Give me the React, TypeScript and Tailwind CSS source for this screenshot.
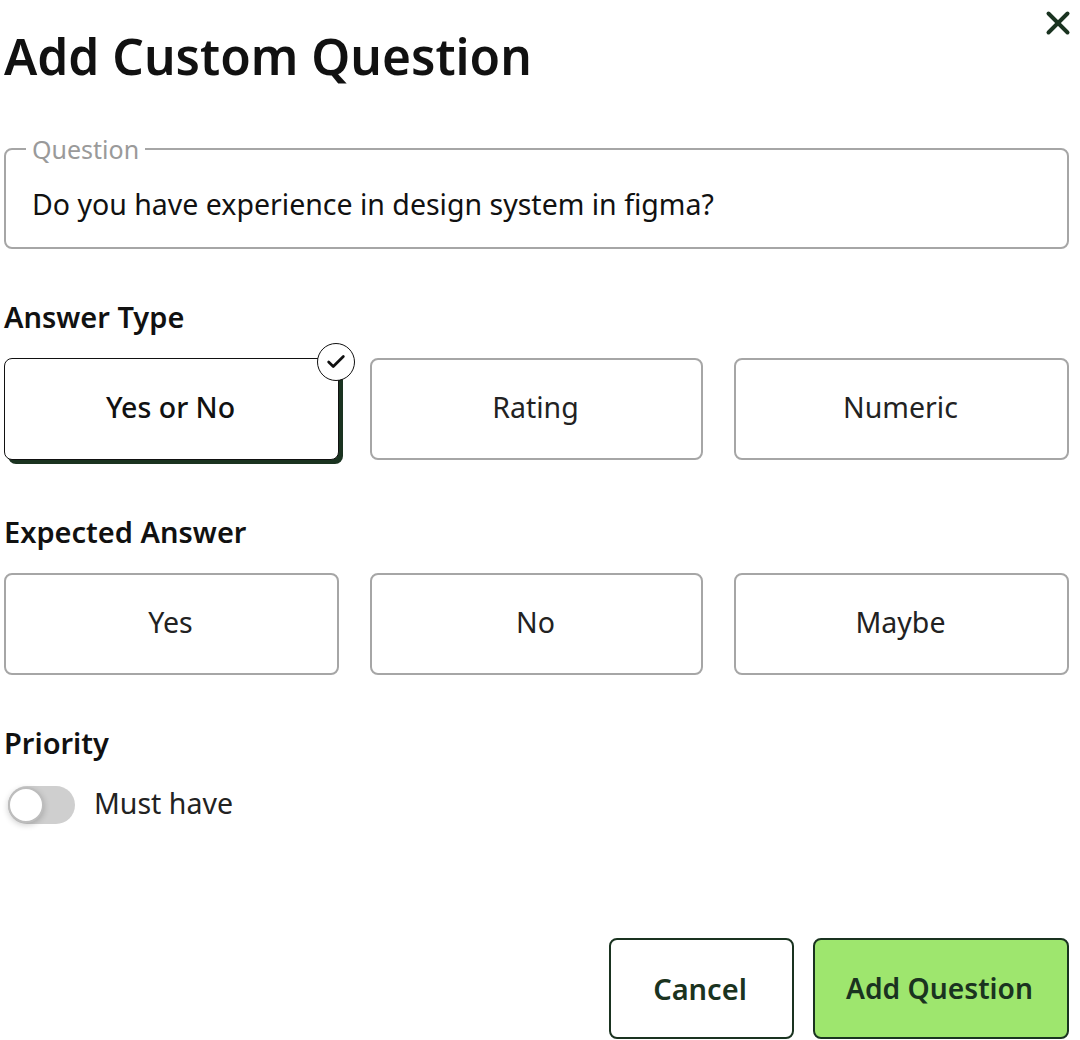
import React from 'react';
import { X, Check } from 'lucide-react';

const font = { fontFamily: '"Noto Sans", sans-serif' };

function Choice({ label, selected = false }: { label: string; selected?: boolean }) {
  if (selected) {
    return (
      <div className="relative flex h-[102px] items-center justify-center rounded-[8px] border-[1.5px] border-[#111] bg-white pb-[4px] pr-[2px] text-[28.5px] font-medium text-[#111] shadow-[4px_4px_0_0_#1a3320]">
        {label}
        <span className="absolute -right-[17px] -top-[16px] flex h-[38px] w-[38px] items-center justify-center rounded-full border-[1.5px] border-[#111] bg-white">
          <Check size={22} strokeWidth={3} className="text-[#111]" />
        </span>
      </div>
    );
  }
  return (
    <div className="flex h-[102px] items-center justify-center rounded-[8px] border-2 border-[#a6a6a6] bg-white pb-[4px] pr-[2px] text-[28.5px] text-[#222]">
      {label}
    </div>
  );
}

function SectionLabel({ children, className }: { children: React.ReactNode; className?: string }) {
  return <div className={`text-[29px] font-semibold leading-[36px] text-[#111] ${className ?? ''}`}>{children}</div>;
}

export default function App() {
  return (
    <div className="h-[1040px] w-[1080px] overflow-hidden bg-white pl-[4px] pr-[11px]" style={font}>
      <div className="flex items-start justify-between pt-[23px]">
        <h1 className="text-[49.6px] font-semibold leading-[66px] text-[#111]">Add Custom Question</h1>
        <X size={38} strokeWidth={2.5} className="-mr-[8px] -mt-[19px] text-[#1a3320]" />
      </div>

      <fieldset className="mt-[43px] h-[117px] rounded-[8px] border-2 border-[#a6a6a6] pl-[26px]">
        <legend className="-ml-[6px] px-[6px] text-[25px] leading-[34px] text-[#9a9a9a]">Question</legend>
        <div className="mt-[18px] text-[28.5px] leading-[40px] text-[#111]">Do you have experience in design system in figma?</div>
      </fieldset>

      <SectionLabel className="mt-[50px]">Answer Type</SectionLabel>
      <div className="mt-[23px] grid grid-cols-[335px_333px_1fr] gap-[31px]">
        <Choice label="Yes or No" selected />
        <Choice label="Rating" />
        <Choice label="Numeric" />
      </div>

      <SectionLabel className="mt-[54px]">Expected Answer</SectionLabel>
      <div className="mt-[23px] grid grid-cols-[335px_333px_1fr] gap-[31px]">
        <Choice label="Yes" />
        <Choice label="No" />
        <Choice label="Maybe" />
      </div>

      <SectionLabel className="mt-[50px]">Priority</SectionLabel>
      <div className="mt-[24px] flex items-center gap-[19px]">
        <div className="ml-[4px] flex h-[38px] w-[67px] items-center rounded-full bg-[#cfcfcf]">
          <span className="h-[36px] w-[36px] rounded-full border-2 border-[#bdbdbd] bg-white shadow-[0_2px_6px_rgba(0,0,0,0.2)]" />
        </div>
        <span className="-mt-[3px] text-[28.5px] text-[#222]">Must have</span>
      </div>

      <div className="mt-[113px] flex justify-end gap-[19px]">
        <button className="h-[101px] w-[185px] rounded-[8px] border-2 border-[#1a3320] bg-white pr-[3px] text-[29px] font-semibold text-[#1a3320]">
          Cancel
        </button>
        <button className="h-[101px] w-[256px] rounded-[8px] border-2 border-[#1a3320] bg-[#9ee66e] pr-[3px] text-[28.2px] font-semibold text-[#1a3320]">
          Add Question
        </button>
      </div>
    </div>
  );
}
